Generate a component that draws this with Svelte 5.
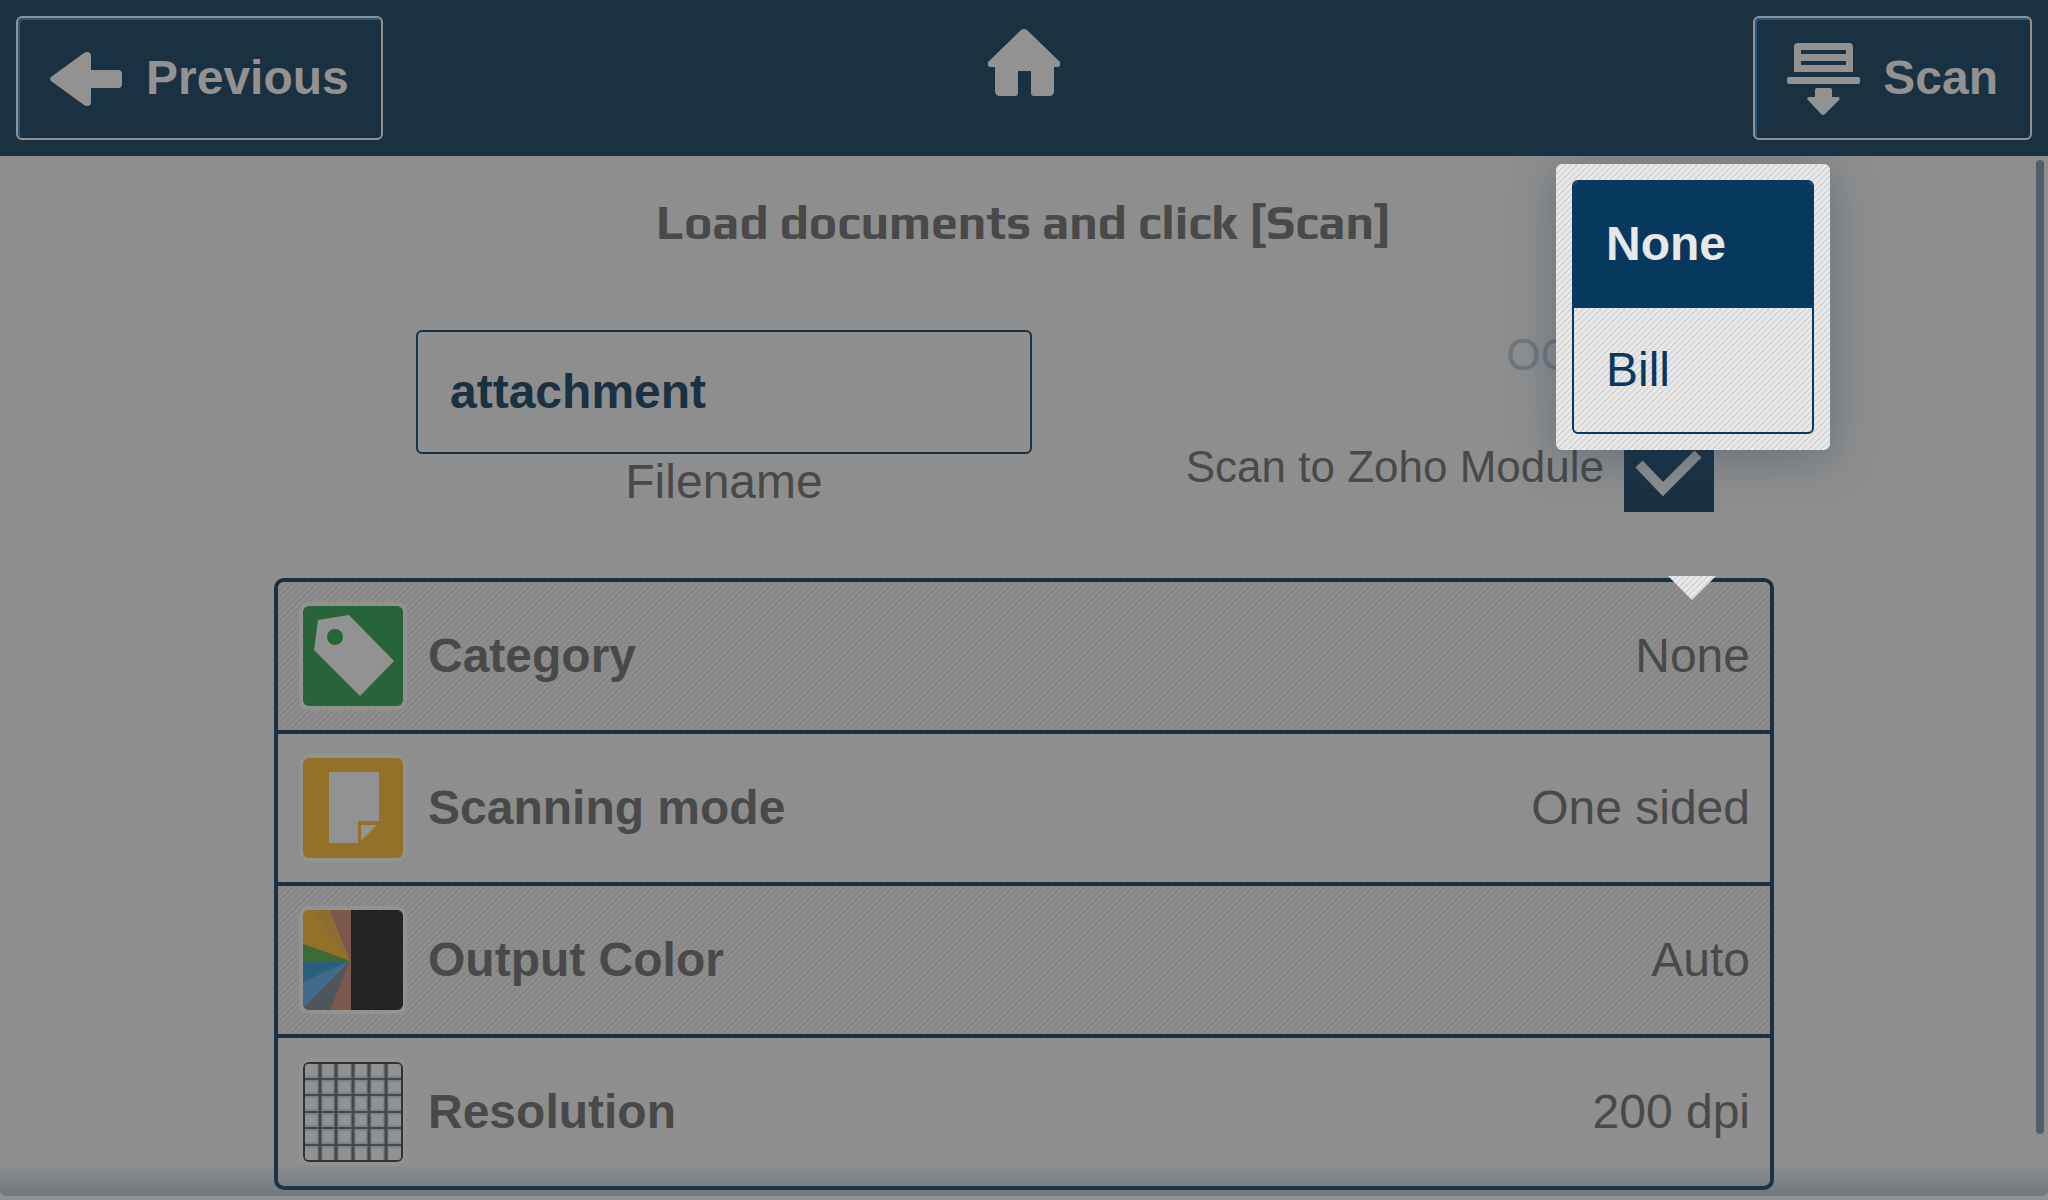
<script lang="ts">
	interface Setting {
		id: string;
		label: string;
		value: string;
	}

	const options = ['None', 'Bill'];

	let filename = $state('attachment');
	let ocr = $state(false);
	let scanToModule = $state(true);
	let category = $state('None');
	let menuOpen = $state(true);

	const settings: Setting[] = $derived([
		{ id: 'category', label: 'Category', value: category },
		{ id: 'mode', label: 'Scanning mode', value: 'One sided' },
		{ id: 'color', label: 'Output Color', value: 'Auto' },
		{ id: 'resolution', label: 'Resolution', value: '200 dpi' }
	]);

	const gridLines = [17, 33, 50, 66, 83];

	function openSetting(id: string) {
		menuOpen = id === 'category' && !menuOpen;
	}

	function choose(option: string) {
		category = option;
		menuOpen = false;
	}
</script>

<div class="page">
	<header class="toolbar">
		<button class="action" type="button">
			<svg viewBox="0 0 72 72" aria-hidden="true">
				<path d="M1 35 34 11Q36 10 37 10 41 10 41 14V28H68Q72 28 72 32V42Q72 46 68 46H41V60Q41 64 37 64 35 64 34 63L1 39Q-1 37 1 35Z" />
			</svg>
			<span>Previous</span>
		</button>
		<button class="home" type="button" aria-label="Home">
			<svg viewBox="0 0 72 72" aria-hidden="true">
				<path d="M33 6Q36 4 39 6L72 38Q73 43 69 43H66V67Q66 72 61 72H46Q43 72 43 69V47H30V69Q30 72 27 72H12Q7 72 7 67V43H3Q-1 43 0 38Z" />
			</svg>
		</button>
		<button class="action end" type="button">
			<svg viewBox="0 0 72 72" aria-hidden="true">
				<path fill-rule="evenodd" d="M11 1H62Q66 1 66 5V30H7V5Q7 1 11 1ZM14 8V12H59V8ZM14 19V23H59V19Z" />
				<rect y="35" width="73" height="7" rx="2" />
				<path d="M30 46H43Q45 46 45 48V55H51Q54 56 52 58L38 72Q36 74 34 72L21 58Q19 56 22 55H28V48Q28 46 30 46Z" />
			</svg>
			<span>Scan</span>
		</button>
	</header>

	<main class="content">
		<h1>Load documents and click [Scan]</h1>

		<div class="form">
			<div class="field">
				<input id="filename" class="filename" type="text" autocomplete="off" spellcheck="false" bind:value={filename} />
				<label for="filename">Filename</label>
			</div>
			<div class="checks">
				<label class="check disabled">
					<span>OCR</span>
					<span class="box">
						<input type="checkbox" disabled bind:checked={ocr} />
					</span>
				</label>
				<label class="check">
					<span>Scan to Zoho Module</span>
					<span class="box">
						<input type="checkbox" bind:checked={scanToModule} />
						{#if scanToModule}
							<svg viewBox="0 0 90 90" aria-hidden="true">
								<path d="M15 42 39 67 74 32" />
							</svg>
						{/if}
					</span>
				</label>
			</div>
		</div>

		<div class="settings">
			<div class="rows">
				{#each settings as setting (setting.id)}
					<button class="row" type="button" onclick={() => openSetting(setting.id)}>
						<span class="tile {setting.id}">
							<svg viewBox="0 0 100 100" aria-hidden="true">
								{#if setting.id === 'category'}
									<path fill="#929292" fill-rule="evenodd" d="M15 14 46 9 91 55 57 90 11 44ZM32 23a8 8 0 1 0 0 16 8 8 0 1 0 0-16Z" />
								{:else if setting.id === 'mode'}
									<path fill="#929292" d="M26 14H76V63H55V85H26ZM58 67H74L58 83Z" />
								{:else if setting.id === 'color'}
									<rect width="100" height="100" fill="#7b584b" />
									<path fill="#947128" d="M0 0H20L47 51 0 34Z" />
									<path fill="#8e6c32" d="M10 0H27L47 51Z" />
									<path fill="#3d6b35" d="M0 34 47 51 0 52Z" />
									<path fill="#2a5f80" d="M0 52 47 51 0 72Z" />
									<path fill="#41698a" d="M0 72 47 51 0 98Z" />
									<path fill="#4c565d" d="M0 98 47 51 27 100H0Z" />
									<rect x="48" width="52" height="100" fill="#242424" />
								{:else}
									<g fill="none" stroke="#7d8388" stroke-width="6">
										{#each gridLines as p (p)}
											<path d="M{p} 0V100M0 {p}H100" />
										{/each}
									</g>
									<g fill="none" stroke="#45494e">
										{#each gridLines as p (p)}
											<path stroke-width="3" d="M{p} 0V100" />
											<path stroke-width="2" d="M0 {p}H100" />
										{/each}
									</g>
									<rect x="1" y="1" width="98" height="98" rx="4" fill="none" stroke="#303335" stroke-width="2" />
								{/if}
							</svg>
						</span>
						<span class="name">{setting.label}</span>
						<span class="value">{setting.value}</span>
					</button>
				{/each}
			</div>

			{#if menuOpen}
				<div class="menu">
					<div class="options" role="listbox" aria-label="Category">
						{#each options as option (option)}
							<button
								class="option"
								class:selected={option === category}
								type="button"
								role="option"
								aria-selected={option === category}
								onclick={() => choose(option)}
							>
								{option}
							</button>
						{/each}
					</div>
				</div>
				<div class="pointer"></div>
			{/if}
		</div>

		<div class="scrollbar"></div>
		<div class="fade"></div>
	</main>
</div>

<style>
	:global(body) {
		background: #8e8e8e;
	}

	.page {
		--navy: #1a3142;
		--navy-bright: #07385e;
		--light: #929292;
		--surface: #8e8e8e;
		--text: #494949;
		display: flex;
		flex-direction: column;
		min-height: 100vh;
		overflow: hidden;
		font-family: "Liberation Sans", Arial, sans-serif;
		font-size: 48px;
		line-height: 56px;
		color: var(--text);
	}

	.page,
	.page * {
		box-sizing: border-box;
	}

	button,
	input {
		margin: 0;
		font: inherit;
		cursor: pointer;
	}

	.toolbar {
		position: relative;
		z-index: 1;
		display: grid;
		grid-template-columns: 1fr auto 1fr;
		align-items: start;
		padding: 16px;
		background: var(--navy);
	}

	.toolbar svg {
		display: block;
		width: 72px;
		height: 72px;
		fill: var(--light);
		overflow: visible;
	}

	.action {
		display: flex;
		align-items: center;
		justify-self: start;
		gap: 24px;
		padding: 24px 32px;
		font-weight: 700;
		color: var(--light);
		background: none;
		border: 2px solid var(--light);
		border-radius: 6px;
		box-shadow: inset 2px 2px 0 #215a86;
	}

	.action.end {
		justify-self: end;
	}

	.home {
		padding: 8px;
		background: none;
		border: none;
	}

	.content {
		position: relative;
		z-index: 0;
		flex: 1;
		padding: 38px 24px 6px;
		background: var(--surface);
		border-bottom: 4px solid var(--light);
	}

	h1 {
		margin: 0 0 60px;
		font-family: Play, Roboto, sans-serif;
		font-size: 48px;
		font-weight: 700;
		line-height: 56px;
		text-align: center;
	}

	.form,
	.settings {
		max-width: 1500px;
		margin: 0 auto;
	}

	.form {
		display: grid;
		grid-template-columns: 3fr 2fr;
		margin-bottom: 66px;
	}

	.field {
		display: flex;
		flex-direction: column;
		align-items: center;
		padding-top: 20px;
	}

	.filename {
		width: 616px;
		max-width: 100%;
		padding: 32px;
		font-weight: 700;
		color: var(--navy);
		background: none;
		border: 2px solid var(--navy);
		border-radius: 6px;
		outline: none;
	}

	.checks {
		display: flex;
		flex-direction: column;
		align-items: flex-end;
		gap: 22px;
		padding-right: 60px;
	}

	.check {
		display: flex;
		align-items: center;
		gap: 20px;
		font-size: 44px;
		white-space: nowrap;
	}

	.check.disabled {
		color: #6f777d;
	}

	.box {
		display: grid;
		width: 90px;
		height: 90px;
	}

	.box input,
	.box svg {
		grid-area: 1 / 1;
		width: 90px;
		height: 90px;
	}

	.box input {
		appearance: none;
		border: 2px solid var(--navy);
	}

	.box input:checked {
		background: var(--navy);
	}

	.box input:disabled {
		border-color: #6f777d;
	}

	.box svg {
		fill: none;
		stroke: var(--surface);
		stroke-width: 10;
		pointer-events: none;
	}

	.settings {
		position: relative;
	}

	.rows {
		overflow: hidden;
		border: 4px solid var(--navy);
		border-radius: 10px;
	}

	.row {
		display: flex;
		align-items: center;
		gap: 21px;
		width: 100%;
		padding: 20px 20px 20px 21px;
		color: inherit;
		text-align: left;
		background: none;
		border: none;
	}

	.row:nth-child(odd) {
		background: linear-gradient(135deg, #8e8e8e 25%, #868686 25% 50%, #8e8e8e 50% 75%, #868686 75%) 0 0 / 6px 6px;
	}

	.row + .row {
		border-top: 4px solid var(--navy);
	}

	.tile {
		flex-shrink: 0;
		border: 4px solid var(--light);
		border-radius: 10px;
		background: var(--light);
	}

	.tile svg {
		display: block;
		width: 100px;
		height: 100px;
		border-radius: 6px;
	}

	.tile.category svg {
		background: #28643a;
	}

	.tile.mode svg {
		background: #947128;
	}

	.name {
		flex: 1;
		font-weight: 700;
	}

	.menu,
	.pointer {
		position: absolute;
		z-index: 2;
		background: linear-gradient(135deg, #ebebeb 20%, #d8d8d8 20% 50%, #ebebeb 50% 70%, #d8d8d8 70%) 0 0 / 6px 6px;
	}

	.menu {
		right: -56px;
		bottom: calc(100% + 128px);
		min-width: 274px;
		padding: 16px;
		border-radius: 6px;
		box-shadow: 0 8px 48px rgba(26, 62, 88, 0.36);
	}

	.options {
		overflow: hidden;
		border: 2px solid var(--navy-bright);
		border-radius: 6px;
	}

	.option {
		display: block;
		width: 100%;
		padding: 34px 32px;
		color: var(--navy-bright);
		text-align: left;
		background: none;
		border: none;
	}

	.option + .option {
		border-top: 2px solid var(--navy-bright);
	}

	.option.selected {
		font-weight: 700;
		color: #e8e8e8;
		background: var(--navy-bright);
	}

	.pointer {
		top: -2px;
		right: 58px;
		width: 48px;
		height: 24px;
		clip-path: polygon(0 0, 100% 0, 50% 100%);
	}

	.scrollbar {
		position: absolute;
		top: 4px;
		right: 4px;
		bottom: 62px;
		width: 8px;
		border-radius: 4px;
		background: #545d69;
	}

	.fade {
		position: absolute;
		right: 0;
		bottom: 0;
		left: 0;
		height: 32px;
		background: linear-gradient(rgba(26, 62, 88, 0), rgba(26, 62, 88, 0.28));
		border-radius: 0 0 6px 6px;
		pointer-events: none;
	}
</style>
